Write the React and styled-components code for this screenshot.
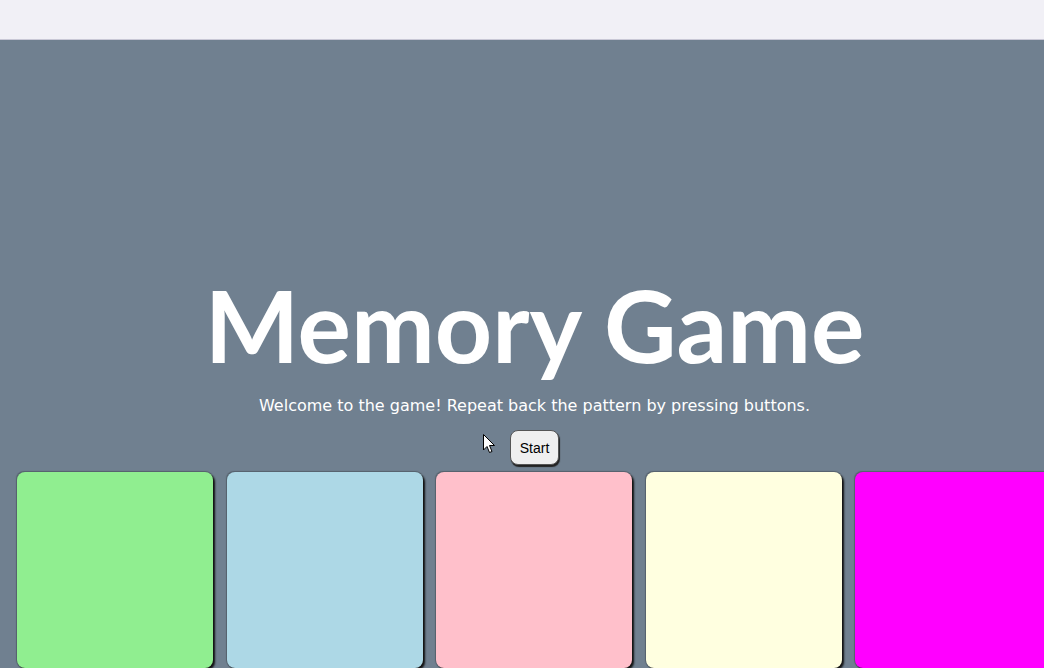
import React from "react";
import styled, { createGlobalStyle } from "styled-components";

const GlobalStyle = createGlobalStyle`
  html, body {
    margin: 0;
    padding: 0;
    height: 100%;
    overflow: hidden;
  }
  body {
    background: #708090;
  }
`;

const TopBar = styled.div`
  height: 39px;
  background: #f1f0f6;
  border-bottom: 1px solid #c9c8d6;
`;

const Main = styled.main`
  position: relative;
  height: 628px;
  background: #708090;
  display: flex;
  flex-direction: column;
  padding-top: 234px;
  box-sizing: border-box;
  overflow: hidden;
`;

const Intro = styled.section`
  display: flex;
  flex-direction: column;
  align-items: center;
  padding-left: 25px;
`;

const Title = styled.h1`
  margin: 0;
  font-family: Lato, "Open Sans", sans-serif;
  font-weight: 700;
  font-size: 100px;
  line-height: 1;
  color: #fff;
`;

const Subtitle = styled.p`
  margin: 22px 0 0;
  font-family: "DejaVu Sans", Verdana, sans-serif;
  font-size: 16px;
  color: #fff;
`;

const StartButton = styled.button`
  margin-top: 15px;
  width: 49px;
  height: 35px;
  padding: 0;
  background: #efefef;
  border: 1px solid #555;
  border-radius: 8px;
  box-shadow: 1px 2px 1px #222;
  font-family: "Liberation Sans", Arial, sans-serif;
  font-size: 14px;
  color: #000;
`;

const Tiles = styled.div`
  display: flex;
  gap: 13.5px;
  padding-left: 17px;
  margin-top: 7px;
`;

const Tile = styled.div`
  flex: 0 0 196px;
  height: 196px;
  border-radius: 8px;
  background: ${(p) => p.$color};
  box-shadow: 2px 2px 2px #111, -0.5px -0.5px 1px rgba(0, 0, 0, 0.25);
`;

const Cursor = styled.svg`
  position: absolute;
  left: 483px;
  top: 394px;
`;

const colors = ["#90ee90", "#add8e6", "#ffc0cb", "#ffffe0", "#ff00ff"];

export default function App() {
  return (
    <>
      <GlobalStyle />
      <TopBar />
      <Main>
        <Intro>
          <Title>Memory Game</Title>
          <Subtitle>Welcome to the game! Repeat back the pattern by pressing buttons.</Subtitle>
          <StartButton>Start</StartButton>
        </Intro>
        <Tiles>
          {colors.map((c) => (
            <Tile key={c} $color={c} />
          ))}
        </Tiles>
        <Cursor width="14" height="22" viewBox="0 0 14 22">
          <path d="M0.5 0.5 L0.5 16 L4 12.5 L6.5 18.5 L9 17.5 L6.5 11.5 L11.5 11.5 Z" fill="#fff" stroke="#000" strokeWidth="1" />
        </Cursor>
      </Main>
    </>
  );
}
